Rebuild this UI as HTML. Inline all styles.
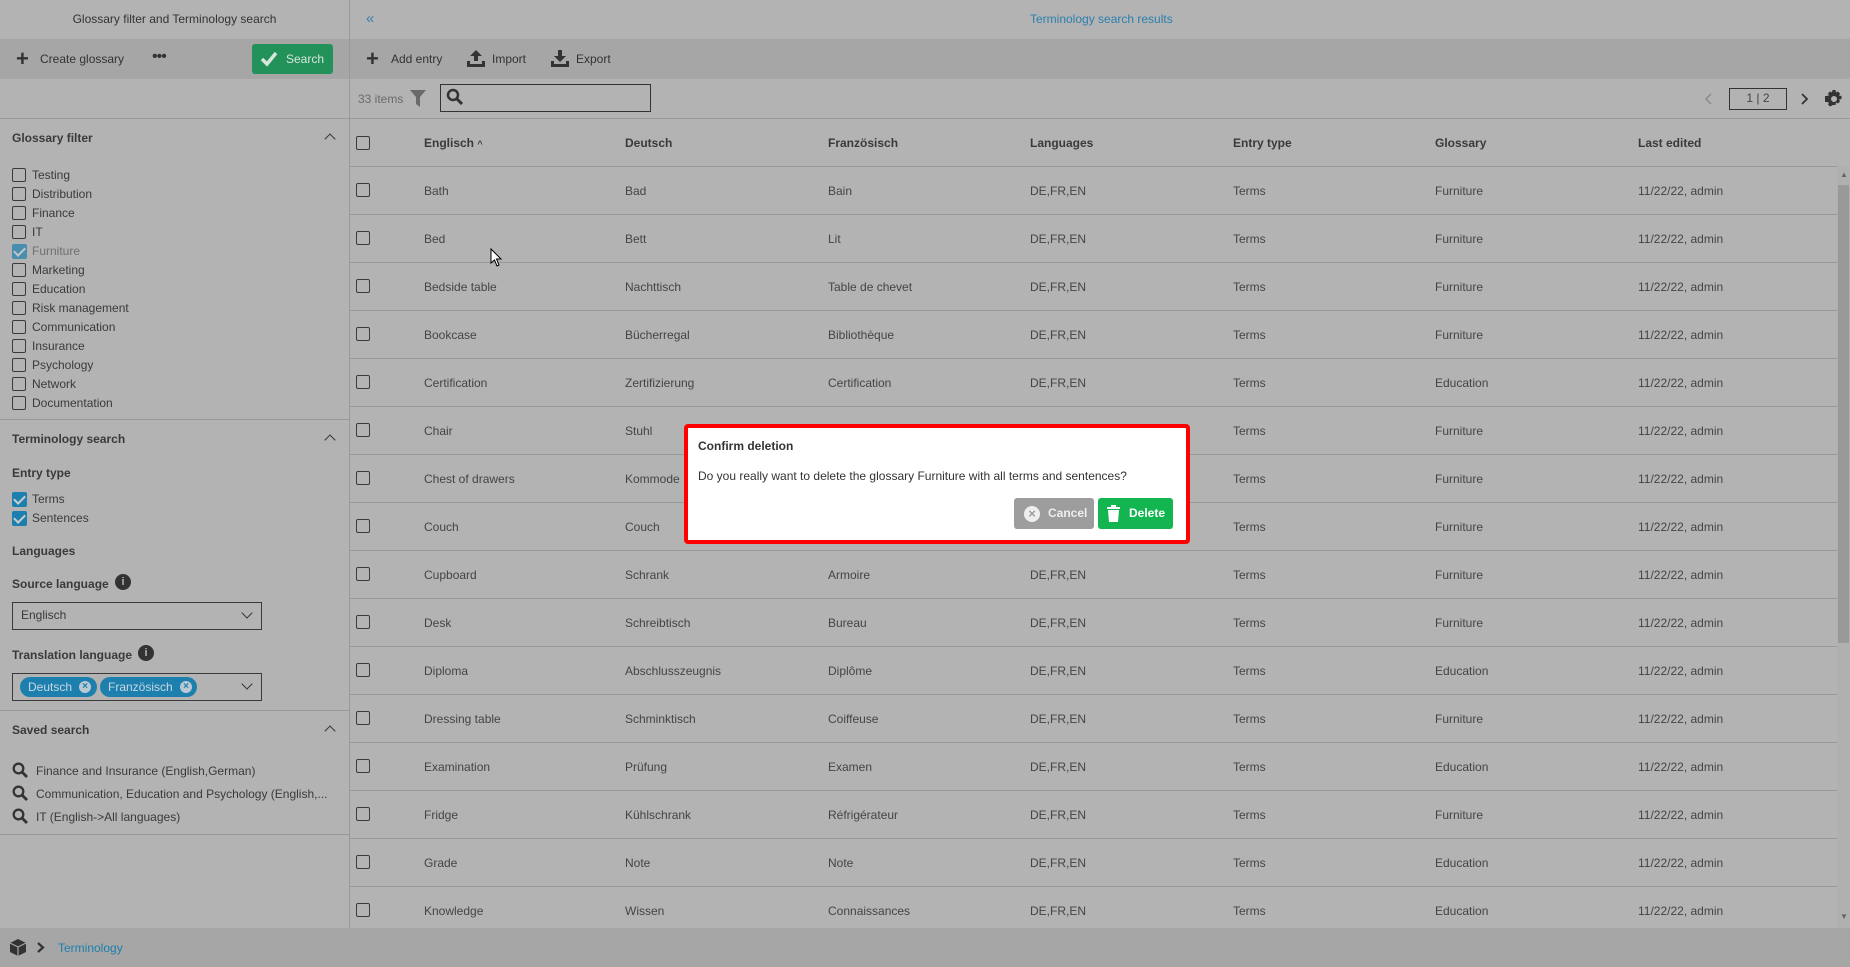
<!DOCTYPE html>
<html><head><meta charset="utf-8"><style>
*{box-sizing:border-box;margin:0;padding:0}
body{width:1850px;height:967px;overflow:hidden;background:#b3b3b3;font-family:"Liberation Sans",sans-serif;font-size:12px;color:#3a3a3a;position:relative}
.a{position:absolute;white-space:nowrap}
.cb{position:absolute;width:14px;height:14px;border:1.5px solid #3a3a3a;border-radius:2px}
.cbk{position:absolute;width:15px;height:15px;background:#1c7fae;border-radius:2px}
.cbk:after{content:"";position:absolute;left:4px;top:1px;width:5px;height:9px;border:solid #ccc;border-width:0 2px 2px 0;transform:rotate(45deg)}
.hl{position:absolute;height:1px;background:#999}
.b{font-weight:bold}
.tbl .a{color:#444}
.chev{position:absolute;width:8px;height:8px;border-left:1.5px solid #333;border-top:1.5px solid #333;transform:rotate(45deg)}
</style></head><body>
<div class="a" style="left:0;top:0;width:349px;height:39px;line-height:39px;text-align:center;color:#333">Glossary filter and Terminology search</div>
<div class="a" style="left:0;top:39px;width:1850px;height:40px;background:#a6a6a6"></div>
<div class="a" style="left:349px;top:0;width:1px;height:928px;background:#999"></div>
<div class="a" style="left:16px;top:49px;font-size:22px;line-height:20px;color:#333;font-weight:bold">+</div>
<div class="a" style="left:40px;top:52px;color:#333">Create glossary</div>
<div class="a" style="left:152px;top:48px;font-size:16px;color:#333;letter-spacing:-1px">•••</div>
<div class="a" style="left:252px;top:44px;width:81px;height:30px;background:#23915a;border-radius:3px;color:#d8e6dd;line-height:30px;padding-left:34px">Search</div>
<svg class="a" style="left:260px;top:51px" width="18" height="16"><path d="M2 8l5 5 9-11" stroke="#d8e6dd" stroke-width="3.5" fill="none"/></svg>
<div class="hl" style="left:0;top:118px;width:1850px"></div>
<div class="a b" style="left:12px;top:131px">Glossary filter</div>
<div class="chev" style="left:326px;top:135px"></div>
<div id="gl"></div>
<div class="hl" style="left:0;top:419px;width:349px"></div>
<div class="a b" style="left:12px;top:432px">Terminology search</div>
<div class="chev" style="left:326px;top:436px"></div>
<div class="a b" style="left:12px;top:466px">Entry type</div>
<div class="cbk" style="left:12px;top:492px"></div><div class="a" style="left:32px;top:492px">Terms</div>
<div class="cbk" style="left:12px;top:511px"></div><div class="a" style="left:32px;top:511px">Sentences</div>
<div class="a b" style="left:12px;top:544px">Languages</div>
<div class="a b" style="left:12px;top:577px">Source language</div>
<div class="a" style="left:115px;top:574px;width:16px;height:16px;border-radius:50%;background:#333;color:#b3b3b3;font-size:11px;font-weight:bold;text-align:center;line-height:16px">i</div>
<div class="a" style="left:12px;top:602px;width:250px;height:28px;border:1.5px solid #3a3a3a;padding-left:8px;line-height:25px;color:#3a3a3a">Englisch</div>
<div class="chev" style="left:243px;top:609px;transform:rotate(225deg)"></div>
<div class="a b" style="left:12px;top:648px">Translation language</div>
<div class="a" style="left:138px;top:645px;width:16px;height:16px;border-radius:50%;background:#333;color:#b3b3b3;font-size:11px;font-weight:bold;text-align:center;line-height:16px">i</div>
<div class="a" style="left:12px;top:673px;width:250px;height:28px;border:1.5px solid #3a3a3a"></div>
<div class="a" style="left:20px;top:677px;width:77px;height:20px;border-radius:10px;background:#1c7fae;color:#c8d8e2;line-height:20px;padding-left:8px">Deutsch</div>
<div class="a" style="left:79px;top:681px;width:12px;height:12px;border-radius:50%;background:#b9c9d3;color:#1c7fae;font-size:10px;font-weight:bold;text-align:center;line-height:12px">×</div>
<div class="a" style="left:100px;top:677px;width:97px;height:20px;border-radius:10px;background:#1c7fae;color:#c8d8e2;line-height:20px;padding-left:8px">Französisch</div>
<div class="a" style="left:180px;top:681px;width:12px;height:12px;border-radius:50%;background:#b9c9d3;color:#1c7fae;font-size:10px;font-weight:bold;text-align:center;line-height:12px">×</div>
<div class="chev" style="left:243px;top:680px;transform:rotate(225deg)"></div>
<div class="hl" style="left:0;top:710px;width:349px"></div>
<div class="a b" style="left:12px;top:723px">Saved search</div>
<div class="chev" style="left:326px;top:727px"></div>
<div id="ss"></div>
<div class="hl" style="left:0;top:834px;width:349px"></div>
<div class="a" style="left:0;top:928px;width:1850px;height:39px;background:#a6a6a6"></div>
<svg class="a" style="left:10px;top:939px" width="16" height="17"><path d="M8 0L16 4V13L8 17L0 13V4Z" fill="#333"/><path d="M0 4L8 8L16 4M8 8V17" stroke="#a6a6a6" stroke-width="1.2" fill="none"/></svg>
<svg class="a" style="left:37px;top:942px" width="8" height="11"><path d="M1 1L6 5.5L1 10" stroke="#333" stroke-width="2.2" fill="none"/></svg>
<div class="a" style="left:58px;top:941px;color:#1c7fae">Terminology</div>
<div class="a" style="left:366px;top:10px;color:#3f7fae;font-size:15px">«</div>
<div class="a" style="left:1030px;top:12px;color:#2c7fb0">Terminology search results</div>
<div class="a" style="left:366px;top:49px;font-size:22px;line-height:20px;color:#333;font-weight:bold">+</div>
<div class="a" style="left:391px;top:52px;color:#333">Add entry</div>
<svg class="a" style="left:467px;top:50px" width="18" height="17"><path d="M9 0L3 6H7V11H11V6H15Z M0 11V17H18V11H15V14H3V11Z" fill="#333"/></svg>
<div class="a" style="left:492px;top:52px;color:#333">Import</div>
<svg class="a" style="left:551px;top:50px" width="18" height="17"><path d="M7 0H11V6H15L9 12L3 6H7Z M0 11V17H18V11H15V14H3V11Z" fill="#333"/></svg>
<div class="a" style="left:576px;top:52px;color:#333">Export</div>
<div class="a" style="left:358px;top:92px;color:#6a6a6a">33 items</div>
<svg class="a" style="left:410px;top:90px" width="16" height="17"><path d="M0 0H16L10 7V17L6 14V7Z" fill="#6a6a6a"/></svg>
<div class="a" style="left:440px;top:84px;width:211px;height:28px;border:1.5px solid #333"></div>
<svg class="a" style="left:446px;top:88px" width="18" height="18"><circle cx="7" cy="7" r="5" stroke="#333" stroke-width="2.5" fill="none"/><path d="M11 11L16 16" stroke="#333" stroke-width="3"/></svg>
<svg class="a" style="left:1705px;top:93px" width="8" height="12"><path d="M6 1L1 6L6 11" stroke="#888" stroke-width="1.5" fill="none"/></svg>
<div class="a" style="left:1729px;top:88px;width:58px;height:22px;border:1.5px solid #333;text-align:center;line-height:19px;color:#444">1 | 2</div>
<svg class="a" style="left:1801px;top:93px" width="8" height="12"><path d="M1 1L6 6L1 11" stroke="#333" stroke-width="1.8" fill="none"/></svg>
<svg class="a" style="left:1825px;top:90px" width="18" height="18" viewBox="0 0 18 18"><path d="M7.5 0h3l.5 2.5 2-1 2 2-1 2 2.5.5v3l-2.5.5 1 2-2 2-2-1-.5 2.5h-3L7 15.5l-2 1-2-2 1-2L1.5 12H0V6h1.5L4 5.5l-1-2 2-2 2 1z" fill="#333"/><circle cx="9" cy="9" r="3" fill="#b3b3b3"/></svg>
<div class="tbl" id="tb"></div>
<div class="a" style="left:1837px;top:166px;width:13px;height:762px;background:#b0b0b0"></div>
<div class="a" style="left:1838px;top:185px;width:11px;height:458px;background:#999"></div>
<div class="a" style="left:1840px;top:170px;font-size:8px;color:#666">▲</div>
<div class="a" style="left:1840px;top:912px;font-size:8px;color:#666">▼</div>
<div class="a" style="left:684px;top:424px;width:506px;height:120px;background:#fff;border:4px solid #f00;border-radius:4px;z-index:5">
<div class="a b" style="left:10px;top:11px;color:#333">Confirm deletion</div>
<div class="a" style="left:10px;top:41px;color:#333">Do you really want to delete the glossary Furniture with all terms and sentences?</div>
<div class="a" style="left:326px;top:70px;width:80px;height:31px;background:#9d9d9d;border-radius:3px;color:#eee;line-height:31px;padding-left:34px;font-weight:bold;font-size:12px">Cancel</div>
<div class="a" style="left:336px;top:78px;width:16px;height:16px;border-radius:50%;background:#eee;color:#9d9d9d;text-align:center;line-height:16px;font-weight:bold;font-size:13px">×</div>
<div class="a" style="left:410px;top:70px;width:75px;height:31px;background:#12b54f;border-radius:3px;color:#fff;line-height:31px;padding-left:31px;font-weight:bold;font-size:12px">Delete</div>
<svg class="a" style="left:419px;top:77px" width="13" height="17"><path d="M0 2H13V4H0Z M4 0H9V2H4Z M1 5H12L11 17H2Z" fill="#fff"/></svg>
</div>
<script>
var g=["Testing","Distribution","Finance","IT","Furniture","Marketing","Education","Risk management","Communication","Insurance","Psychology","Network","Documentation"],h="";
g.forEach(function(t,i){var y=167+i*19;if(t=="Furniture"){h+='<div class="cbk" style="left:12px;top:'+(y+1)+'px;opacity:.7"></div><div class="a" style="left:32px;top:'+(y+1)+'px;color:#6f6f6f">'+t+'</div>'}else h+='<div class="cb" style="left:12px;top:'+(y+1)+'px"></div><div class="a" style="left:32px;top:'+(y+1)+'px">'+t+'</div>'});
document.getElementById("gl").innerHTML=h;
var s=["Finance and Insurance (English,German)","Communication, Education and Psychology (English,...","IT (English-&gt;All languages)"];h="";
s.forEach(function(t,i){var y=762+i*23;h+='<svg class="a" style="left:12px;top:'+y+'px" width="16" height="16"><circle cx="6.5" cy="6.5" r="4.8" stroke="#333" stroke-width="2.3" fill="none"/><path d="M10 10L15 15" stroke="#333" stroke-width="2.8"/></svg><div class="a" style="left:36px;top:'+(y+2)+'px;color:#3a3a3a">'+t+'</div>'});
document.getElementById("ss").innerHTML=h;
var X=[424,625,828,1030,1233,1435,1638];
var H=["Englisch <span style='font-size:9px'>^</span>","Deutsch","Französisch","Languages","Entry type","Glossary","Last edited"];
h='<div class="cb" style="left:356px;top:136px"></div>';
H.forEach(function(t,i){h+='<div class="a b" style="left:'+X[i]+'px;top:136px;color:#3a3a3a">'+t+'</div>'});
var R=[["Bath","Bad","Bain","Furniture"],["Bed","Bett","Lit","Furniture"],["Bedside table","Nachttisch","Table de chevet","Furniture"],["Bookcase","Bücherregal","Bibliothèque","Furniture"],["Certification","Zertifizierung","Certification","Education"],["Chair","Stuhl","Chaise","Furniture"],["Chest of drawers","Kommode","Commode","Furniture"],["Couch","Couch","Canapé","Furniture"],["Cupboard","Schrank","Armoire","Furniture"],["Desk","Schreibtisch","Bureau","Furniture"],["Diploma","Abschlusszeugnis","Diplôme","Education"],["Dressing table","Schminktisch","Coiffeuse","Furniture"],["Examination","Prüfung","Examen","Education"],["Fridge","Kühlschrank","Réfrigérateur","Furniture"],["Grade","Note","Note","Education"],["Knowledge","Wissen","Connaissances","Education"]];
R.forEach(function(r,i){var y=166+i*48;h+='<div class="hl" style="left:350px;top:'+y+'px;width:1487px"></div><div class="cb" style="left:356px;top:'+(y+17)+'px"></div>';
var v=[r[0],r[1],r[2],"DE,FR,EN","Terms",r[3],"11/22/22, admin"];v.forEach(function(t,j){h+='<div class="a" style="left:'+X[j]+'px;top:'+(y+18)+'px">'+t+'</div>'})});
document.getElementById("tb").innerHTML=h;
</script>
<svg class="a" style="left:490px;top:248px" width="12" height="19"><path d="M1 1V15L4.5 12L7 18L9 17L6.5 11H11Z" fill="#fff" stroke="#000" stroke-width="1"/></svg>
</body></html>
